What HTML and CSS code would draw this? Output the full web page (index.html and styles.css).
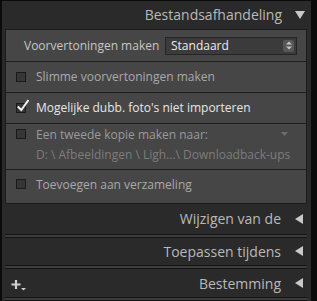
FILE: index.html
```html
<!DOCTYPE html>
<html>
<head>
<meta charset="utf-8">
<link rel="stylesheet" href="styles.css">
</head>
<body>
<div class="app">
  <div class="panel">
    <div class="hdr hdr-open">
      <span class="hdr-title">Bestandsafhandeling</span>
      <svg class="tri" width="10" height="9" viewBox="0 0 10 9"><polygon points="0,0 10,0 5,8" fill="#c9c9c9"/></svg>
    </div>
    <div class="box">
      <div class="row row-preview">
        <span class="label">Voorvertoningen maken</span>
        <div class="select">
          <span class="select-text">Standaard</span>
          <span class="spin">
            <svg width="6" height="9" viewBox="0 0 6 9"><polygon points="0,3.5 6,3.5 3,0.5" fill="#c4c4c4"/><polygon points="0,5.5 6,5.5 3,8.5" fill="#c4c4c4"/></svg>
          </span>
        </div>
      </div>
      <div class="row row-check">
        <span class="cb"></span>
        <span class="ctext dim">Slimme voorvertoningen maken</span>
      </div>
      <div class="row row-check">
        <span class="cb checked">
          <svg class="tick" width="14" height="14" viewBox="0 0 14 14"><path d="M2.5 8.2 L5.3 11 L11.8 2" stroke="#f2f2f2" stroke-width="2" fill="none" stroke-linecap="square"/></svg>
        </span>
        <span class="ctext bright">Mogelijke dubb. foto's niet importeren</span>
      </div>
      <div class="row row-copy">
        <div class="copy-line">
          <span class="cb"></span>
          <span class="ctext dim2">Een tweede kopie maken naar:</span>
          <svg class="dd" width="7" height="4" viewBox="0 0 7 4"><polygon points="0,0 7,0 3.5,4" fill="#6c6c6c"/></svg>
        </div>
        <div class="path">D: \ Afbeeldingen \ Ligh...\ Downloadback-ups</div>
      </div>
      <div class="row row-check last">
        <span class="cb"></span>
        <span class="ctext dim">Toevoegen aan verzameling</span>
      </div>
    </div>
    <div class="hdr hdr-c1">
      <span class="hdr-title">Wijzigen van de</span>
      <svg class="tri-l" width="9" height="10" viewBox="0 0 9 10"><polygon points="9,0 9,10 1,5" fill="#c9c9c9"/></svg>
    </div>
    <div class="bar"></div>
    <div class="hdr">
      <span class="hdr-title">Toepassen tijdens</span>
      <svg class="tri-l" width="9" height="10" viewBox="0 0 9 10"><polygon points="9,0 9,10 1,5" fill="#c9c9c9"/></svg>
    </div>
    <div class="bar"></div>
    <div class="hdr">
      <svg class="plus" width="16" height="12" viewBox="0 0 16 12"><path d="M5 1 V10 M0.5 5.5 H9.5" stroke="#cfcfcf" stroke-width="2.2" fill="none"/><polygon points="10,9 15,9 12.5,11.5" fill="#cfcfcf"/></svg>
      <span class="hdr-title">Bestemming</span>
      <svg class="tri-l" width="9" height="10" viewBox="0 0 9 10"><polygon points="9,0 9,10 1,5" fill="#c9c9c9"/></svg>
    </div>
    <div class="bar"></div>
  </div>
</div>
</body>
</html>
```

FILE: styles.css
```css
html, body {
  margin: 0;
  padding: 0;
  background: #0b0b0b;
}
body {
  width: 317px;
  height: 301px;
  overflow: hidden;
  font-family: "Open Sans", "Noto Sans", sans-serif;
}
.app {
  display: flex;
  height: 301px;
  padding-top: 1px;
  padding-left: 2px;
  box-sizing: border-box;
}
.panel {
  width: 309px;
  background: #2a2a2a;
  padding-left: 3px;
  padding-right: 4px;
  box-sizing: border-box;
  display: flex;
  flex-direction: column;
}
.hdr {
  height: 28px;
  display: flex;
  align-items: center;
  justify-content: flex-end;
  position: relative;
}
.hdr-open {
  height: 28px;
}
.hdr-c1 {
  height: 30px;
}
.hdr-title {
  font-size: 14px;
  color: #b9b9b9;
  margin-right: 13px;
}
.tri {
  margin-right: 2px;
  margin-top: 1px;
}
.tri-l {
  margin-right: 4px;
}
.plus {
  position: absolute;
  left: 6px;
  top: 10px;
}
.bar {
  height: 4px;
  border-top: 1px solid #141414;
  border-bottom: 1px solid #141414;
  background: #3c3c3c;
  box-sizing: border-box;
}
.box {
  background: #464646;
  border: 1px solid #1c1c1c;
  display: flex;
  flex-direction: column;
}
.row {
  display: flex;
  align-items: center;
  border-bottom: 1px solid #1e1e1e;
  box-sizing: border-box;
}
.row.last {
  border-bottom: none;
  height: 33px;
  padding-bottom: 4px;
}
.row-preview {
  height: 32px;
  padding-left: 18px;
}
.label {
  font-size: 12px;
  color: #c6c6c6;
  width: 141px;
}
.select {
  width: 130px;
  height: 16px;
  background: #3b3b3b;
  border: 1px solid #252525;
  display: flex;
  align-items: center;
  justify-content: space-between;
  margin-top: 1px;
}
.select-text {
  font-size: 12px;
  color: #ececec;
  padding-left: 5px;
}
.spin {
  width: 11px;
  height: 12px;
  background: #575757;
  border-radius: 2px;
  display: flex;
  align-items: center;
  justify-content: center;
  margin-right: 2px;
}
.row-check {
  height: 31px;
  padding-left: 10px;
}
.cb {
  width: 10px;
  height: 10px;
  border: 1px solid #1a1a1a;
  background: #363636;
  box-sizing: border-box;
  position: relative;
  margin-right: 10px;
  flex: none;
}
.tick {
  position: absolute;
  left: -1px;
  top: -5px;
}
.ctext {
  font-size: 12px;
}
.dim { color: #a9a9a9; }
.dim2 { color: #9a9a9a; }
.bright { color: #e6e6e6; }
.row-copy {
  height: 46px;
  flex-direction: column;
  align-items: stretch;
  justify-content: flex-start;
  padding-left: 10px;
  padding-top: 2px;
}
.copy-line {
  display: flex;
  align-items: center;
  height: 17px;
}
.dd {
  margin-left: auto;
  margin-right: 18px;
}
.path {
  font-size: 12px;
  color: #7c7c7c;
  padding-left: 20px;
  margin-top: 3px;
  white-space: nowrap;
}
```
